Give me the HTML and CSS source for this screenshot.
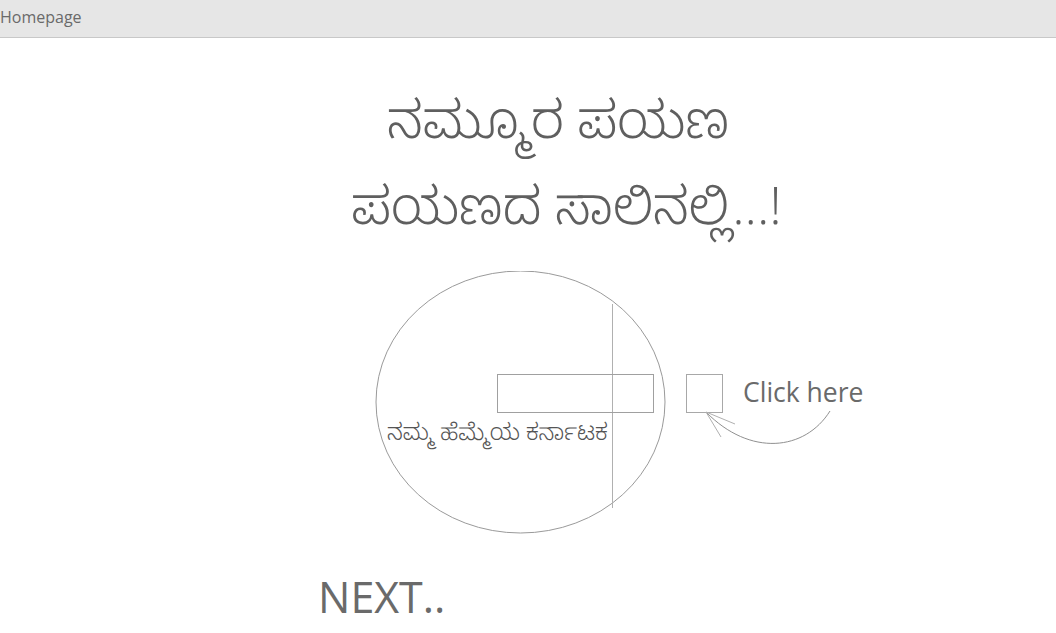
FILE: index.html
```html
<!DOCTYPE html>
<html>
<head>
<meta charset="utf-8">
<link rel="stylesheet" href="styles.css">
</head>
<body>
<div class="topbar">Homepage</div>
<main class="main">
  <h1 class="title">ನಮ್ಮೂರ ಪಯಣ</h1>
  <h2 class="subtitle">ಪಯಣದ ಸಾಲಿನಲ್ಲಿ...!</h2>
  <div class="stage">
    <svg class="drawing" width="1056" height="300" viewBox="0 0 1056 300">
      <ellipse cx="520.5" cy="131" rx="144.5" ry="131" fill="none" stroke="#9a9a9a" stroke-width="1"/>
      <line x1="612.5" y1="33" x2="612.5" y2="237" stroke="#b0b0b0" stroke-width="1"/>
      <rect x="497.5" y="103.5" width="156" height="38" fill="none" stroke="#a0a0a0"/>
      <rect x="686.5" y="103.5" width="36" height="38" fill="none" stroke="#a8a8a8"/>
      <path d="M830 140 C 805 180, 750 186, 706 141" fill="none" stroke="#909090"/>
      <line x1="706" y1="141" x2="735" y2="153" stroke="#b0b0b0"/>
      <line x1="706" y1="141" x2="721" y2="166" stroke="#b0b0b0"/>
    </svg>
    <span class="caption">ನಮ್ಮ ಹೆಮ್ಮೆಯ ಕರ್ನಾಟಕ</span>
    <span class="click">Click here</span>
  </div>
  <div class="next">NEXT..</div>
</main>
</body>
</html>
```
FILE: styles.css
```css
html, body {
  margin: 0;
  padding: 0;
  background: #ffffff;
  font-family: "Open Sans", "Noto Sans", "Noto Sans Kannada", sans-serif;
  color: #5f5f5f;
}
.topbar {
  height: 37px;
  background: #e6e6e6;
  border-bottom: 1px solid #c8c8c8;
  font-size: 16px;
  line-height: 35px;
  color: #6a6a6a;
}
.main {
  display: flex;
  flex-direction: column;
}
.title {
  margin: 52px 0 0 0;
  font-size: 52px;
  font-weight: 350;
  text-align: center;
  line-height: 56px;
  padding-left: 60px;
}
.subtitle {
  margin: 30px 0 0 0;
  font-size: 52px;
  font-weight: 350;
  text-align: center;
  line-height: 56px;
  padding-left: 77px;
}
.stage {
  position: relative;
  height: 300px;
  margin-top: 39px;
}
.drawing {
  position: absolute;
  left: 0;
  top: 0;
}
.caption {
  position: absolute;
  left: 387px;
  top: 144px;
  font-size: 23px;
  font-weight: 300;
  color: #555;
}
.click {
  position: absolute;
  left: 743px;
  top: 103px;
  font-size: 26.5px;
  color: #6a6a6a;
}
.next {
  margin-left: 318px;
  margin-top: -4px;
  font-size: 43px;
  color: #6a6a6a;
}
```
